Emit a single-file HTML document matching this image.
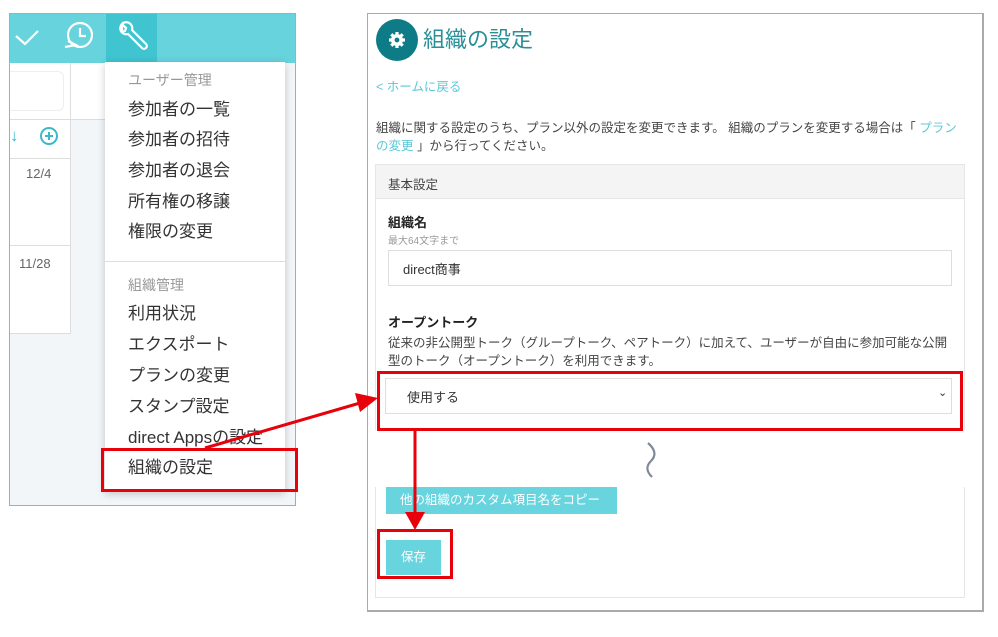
<!DOCTYPE html>
<html><head><meta charset="utf-8"><style>
*{margin:0;padding:0;box-sizing:border-box}
body{width:998px;height:637px;background:#fff;position:relative;overflow:hidden;font-family:"Liberation Sans","Noto Sans CJK JP",sans-serif;color:#333}
.a{position:absolute}
.mi{position:absolute;left:128px;font-size:17px;color:#333;line-height:20px;white-space:nowrap}
.mh{position:absolute;left:128px;font-size:14px;color:#999;line-height:18px}
</style></head><body>
<!-- left panel -->
<div class="a" style="left:9px;top:13px;width:287px;height:493px;border:1px solid #aaa;background:#f2f6f9;overflow:hidden">
 <div class="a" style="left:0;top:0;width:287px;height:49px;background:#67d3dd"></div>
 <div class="a" style="left:96px;top:0;width:51px;height:49px;background:#40c4d0"></div>
 <svg class="a" style="left:0;top:0" width="160" height="49" fill="none" stroke="#fff" stroke-width="2.2">
  <path d="M6 22 L15 30 L28 17"/>
  <circle cx="70" cy="21" r="12"/><path d="M70 14 V22 H76"/><path d="M55 33 L66 31 L58 27"/>
  <path d="M112 10 a6 6 0 0 0 6 10 l14 14 a2.5 2.5 0 0 0 4 -4 l-14 -14 a6 6 0 0 0 -10 -6 l4 4 -1 3 -3 1z"/>
 </svg>
 <div class="a" style="left:0;top:49px;width:61px;height:270px;background:#fff;border-right:1px solid #ddd"></div>
 <div class="a" style="left:61px;top:49px;width:40px;height:56px;background:#fff"></div>
 <div class="a" style="left:-8px;top:57px;width:62px;height:40px;border-radius:6px;background:#fff;border:1px solid #eee"></div>
 <div class="a" style="left:0;top:105px;width:101px;height:1px;background:#ddd"></div>
 <div class="a" style="left:0;top:144px;width:61px;height:1px;background:#ddd"></div>
 <div class="a" style="left:0;top:231px;width:61px;height:1px;background:#ddd"></div>
 <div class="a" style="left:0;top:319px;width:61px;height:1px;background:#ddd"></div>
 <div class="a" style="left:0;top:112px;font-size:17px;color:#3ab9c7">↓</div>
 <svg class="a" style="left:29px;top:111px" width="22" height="24" fill="none" stroke="#3ab9c7" stroke-width="2"><circle cx="10" cy="11" r="8"/><path d="M10 7v8M6 11h8"/></svg>
 <div class="a" style="left:16px;top:152px;font-size:13px;color:#666">12/4</div>
 <div class="a" style="left:9px;top:242px;font-size:13px;color:#666">11/28</div>
</div>
<!-- menu -->
<div class="a" style="left:105px;top:62px;width:180px;height:430px;background:#fff;box-shadow:0 2px 8px rgba(0,0,0,.2)"></div>
<div class="a" style="left:105px;top:261px;width:180px;height:1px;background:#ddd"></div>
<div class="mh" style="top:71px">ユーザー管理</div>
<div class="mi" style="top:100px">参加者の一覧</div>
<div class="mi" style="top:130px">参加者の招待</div>
<div class="mi" style="top:161px">参加者の退会</div>
<div class="mi" style="top:192px">所有権の移譲</div>
<div class="mi" style="top:222px">権限の変更</div>
<div class="mh" style="top:276px">組織管理</div>
<div class="mi" style="top:304px">利用状況</div>
<div class="mi" style="top:335px">エクスポート</div>
<div class="mi" style="top:366px">プランの変更</div>
<div class="mi" style="top:397px">スタンプ設定</div>
<div class="mi" style="top:428px">direct Appsの設定</div>
<div class="mi" style="top:458px">組織の設定</div>
<div class="a" style="left:101px;top:448px;width:197px;height:44px;border:3px solid #e8000b"></div>
<!-- right panel -->
<div class="a" style="left:367px;top:13px;width:617px;height:599px;border:1px solid #aaa;border-right-width:2px;border-bottom-width:2px;background:#fff"></div>
<div class="a" style="left:376px;top:19px;width:42px;height:42px;border-radius:50%;background:#0e7c86"></div>
<svg class="a" style="left:387px;top:30px" width="20" height="20" viewBox="0 0 20 20"><g fill="#fff"><circle cx="10" cy="10" r="6"/><g stroke="#fff" stroke-width="3.2"><path d="M10 2v16M2 10h16M4.3 4.3l11.4 11.4M15.7 4.3L4.3 15.7"/></g></g><circle cx="10" cy="10" r="2.4" fill="#0e7c86"/></svg>
<div class="a" style="left:423px;top:26px;font-size:22px;color:#2a8f96;line-height:28px">組織の設定</div>
<div class="a" style="left:376px;top:76px;font-size:12.5px;color:#5bc8d6">&lt; ホームに戻る</div>
<div class="a" style="left:376px;top:119px;width:590px;font-size:12.5px;line-height:18px;color:#444">組織に関する設定のうち、プラン以外の設定を変更できます。 組織のプランを変更する場合は「 <span style="color:#5bc8d6">プラン<br>の変更</span> 」から行ってください。</div>
<div class="a" style="left:375px;top:164px;width:590px;height:266px;border:1px solid #e6e6e6;border-bottom:none"></div>
<div class="a" style="left:376px;top:165px;width:588px;height:34px;background:#f4f4f4;border-bottom:1px solid #e6e6e6"></div>
<div class="a" style="left:388px;top:174px;font-size:12.5px;color:#444">基本設定</div>
<div class="a" style="left:388px;top:212px;font-size:13px;font-weight:bold;color:#222">組織名</div>
<div class="a" style="left:388px;top:232px;font-size:10px;color:#999">最大64文字まで</div>
<div class="a" style="left:388px;top:250px;width:564px;height:36px;border:1px solid #ddd"></div>
<div class="a" style="left:403px;top:259px;font-size:13px;color:#333">direct商事</div>
<div class="a" style="left:388px;top:312px;font-size:13px;font-weight:bold;color:#222">オープントーク</div>
<div class="a" style="left:388px;top:334px;width:570px;font-size:12.5px;line-height:18px;color:#444">従来の非公開型トーク（グループトーク、ペアトーク）に加えて、ユーザーが自由に参加可能な公開型のトーク（オープントーク）を利用できます。</div>
<div class="a" style="left:385px;top:378px;width:567px;height:36px;border:1px solid #ddd"></div>
<div class="a" style="left:407px;top:387px;font-size:13px;color:#333">使用する</div>
<div class="a" style="left:938px;top:386px;font-size:11px;color:#333">⌄</div>
<div class="a" style="left:377px;top:371px;width:586px;height:60px;border:3px solid #e8000b"></div>
<svg class="a" style="left:640px;top:440px" width="22" height="40"><path d="M8 3 C16 10 16 16 11 21 C6 26 6 31 12 37" fill="none" stroke="#7f8a98" stroke-width="2.2"/></svg>
<div class="a" style="left:375px;top:487px;width:590px;height:111px;border:1px solid #e6e6e6;border-top:none"></div>
<div class="a" style="left:386px;top:487px;width:231px;height:27px;background:#68d4de;color:#fff;font-size:12.5px;line-height:27px;padding-left:14px">他の組織のカスタム項目名をコピー</div>
<div class="a" style="left:386px;top:540px;width:55px;height:35px;background:#68d4de;color:#fff;font-size:12.5px;line-height:35px;text-align:center">保存</div>
<div class="a" style="left:377px;top:529px;width:76px;height:50px;border:3px solid #e8000b"></div>
<!-- arrows -->
<svg class="a" style="left:0;top:0" width="998" height="637">
 <line x1="205" y1="448" x2="360" y2="403" stroke="#e8000b" stroke-width="3"/>
 <polygon points="378,398 355,393 360,412" fill="#e8000b"/>
 <line x1="415" y1="430" x2="415" y2="515" stroke="#e8000b" stroke-width="3"/>
 <polygon points="405,512 425,512 415,530" fill="#e8000b"/>
</svg>
</body></html>
